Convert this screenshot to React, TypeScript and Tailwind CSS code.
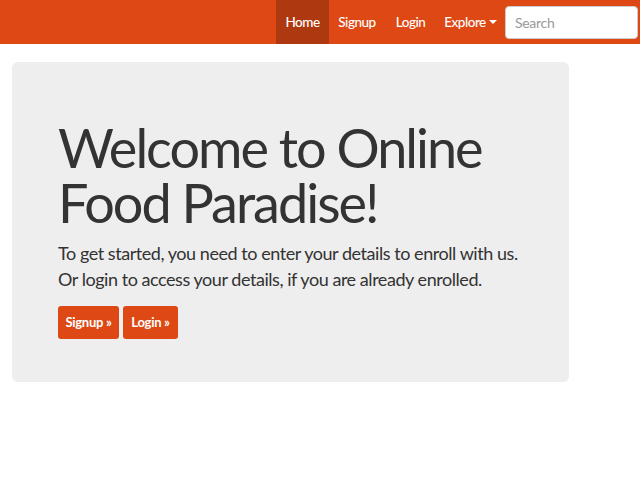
const navLinks = ['Signup', 'Login']

const App = () => {
  return (
    <div className="min-h-[480px] w-[640px] bg-white font-['Lato',sans-serif] text-[#333]">
      <nav className="flex h-[44px] items-stretch justify-end bg-[#dd4814]">
        <ul className="flex items-stretch text-[13.5px] font-medium tracking-[-0.5px] text-white">
          <li className="flex w-[53px] items-center justify-center bg-[#ae3910]">
            <a href="#">Home</a>
          </li>
          <li className="flex w-[56px] items-center justify-center">
            <a href="#">{navLinks[0]}</a>
          </li>
          <li className="flex w-[51px] items-center justify-center">
            <a href="#">{navLinks[1]}</a>
          </li>
          <li className="flex w-[69px] items-center justify-center">
            <a className="flex items-center gap-[3px]" href="#">
              Explore
              <span className="inline-block h-0 w-0 border-x-[4px] border-t-[4px] border-x-transparent border-t-white" />
            </a>
          </li>
        </ul>
        <form className="flex items-center pr-[2px]">
          <input
            className="h-[33px] w-[133px] rounded-[4px] border border-[#ccc] bg-white px-[9px] text-[14px] tracking-[-0.3px] text-[#333] placeholder:text-[#999]"
            placeholder="Search"
            type="text"
          />
        </form>
      </nav>
      <main className="px-[12px] pt-[18px]">
        <section className="w-[557px] rounded-[6px] bg-[#eeeeee] px-[46px] pb-[43px] pt-[58px]">
          <h1 className="whitespace-nowrap text-[54px] leading-[55px] tracking-[-2px] text-[#333]">
            Welcome to Online
            <br />
            Food Paradise!
          </h1>
          <p className="mt-[10px] whitespace-nowrap text-[18px] leading-[26px] tracking-[-0.45px]">
            To get started, you need to enter your details to enroll with us.
            <br />
            Or login to access your details, if you are already enrolled.
          </p>
          <div className="mt-[14px] flex gap-[4px]">
            <a className="flex h-[33px] w-[61px] items-center justify-center rounded-[3px] bg-[#dd4814] text-[13px] font-bold tracking-[-0.3px] text-white" href="#">
              Signup »
            </a>
            <a className="flex h-[33px] w-[55px] items-center justify-center rounded-[3px] bg-[#dd4814] text-[13px] font-bold tracking-[-0.3px] text-white" href="#">
              Login »
            </a>
          </div>
        </section>
      </main>
    </div>
  )
}

export default App
